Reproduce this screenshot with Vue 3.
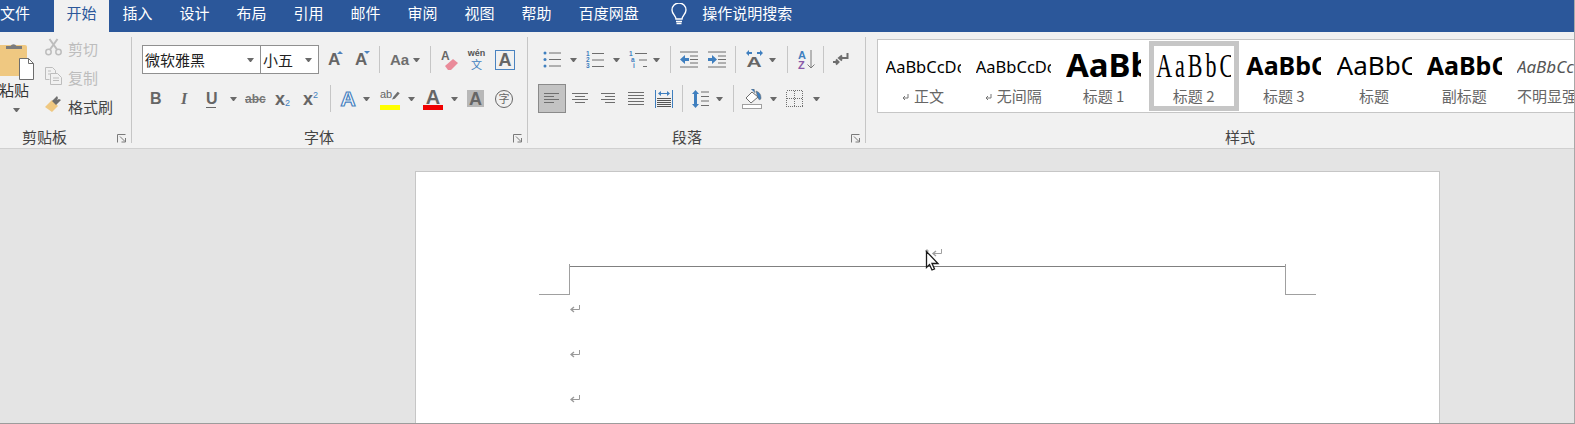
<script setup>
const tabs = ['开始', '插入', '设计', '布局', '引用', '邮件', '审阅', '视图', '帮助', '百度网盘']
const styles = [
  { key: 'normal', sample: 'AaBbCcDc', label: '正文', mark: true },
  { key: 'normal', sample: 'AaBbCcDc', label: '无间隔', mark: true },
  { key: 'h1', sample: 'AaBbCc', label: '标题 1' },
  { key: 'h2', sample: 'AaBbC', label: '标题 2', selected: true },
  { key: 'h3', sample: 'AaBbC', label: '标题 3' },
  { key: 'title', sample: 'AaBbC', label: '标题' },
  { key: 'h3', sample: 'AaBbC', label: '副标题' },
  { key: 'subtle', sample: 'AaBbCcDc', label: '不明显强调' }
]
</script>

<template>
  <div class="app">
    <div class="tabs">
      <span class="file">文件</span>
      <span v-for="(t, i) in tabs" :key="t" class="tab" :class="{ active: i === 0 }">{{ t }}</span>
      <svg class="bulb" width="16" height="23" viewBox="0 0 16 23">
        <path d="M5 16c0-3-4-5-4-9a7 7 0 0 1 14 0c0 4-4 6-4 9z" fill="none" stroke="#fff" stroke-width="1.4" />
        <path d="M5 18.500h6M5.500 20.500h5" stroke="#fff" stroke-width="1.300" />
      </svg>
      <span class="search">操作说明搜索</span>
    </div>

    <div class="ribbon">
      <section class="group g-clip">
        <div class="body clip-body">
          <div class="paste">
            <svg width="34" height="39" viewBox="0 0 34 39">
              <rect x="-4" y="4" width="31" height="31" rx="2" fill="#efc881" />
              <path d="M6 8V5h4.500a3.500 3.500 0 0 1 6 0H22v3z" fill="#7b7b7b" />
              <path d="M19.500 17.500h9l5 5v16h-14z" fill="#fff" stroke="#6d6d6d" />
              <path d="M28.500 17.500v5h5" fill="none" stroke="#6d6d6d" />
            </svg>
            <span class="paste-label">粘贴</span>
            <i class="caret paste-caret"></i>
          </div>
          <div class="clip-actions">
            <div class="clip-row">
              <svg width="17" height="18" viewBox="0 0 17 18" fill="none" stroke="#bdbdbd" stroke-width="1.500">
                <circle cx="3.500" cy="14" r="2.700" /><circle cx="13.500" cy="14" r="2.700" />
                <path d="M5 11.500 12.500 1M12 11.500 4.500 1" stroke-width="2" />
              </svg>
              <span class="off">剪切</span>
            </div>
            <div class="clip-row">
              <svg width="17" height="18" viewBox="0 0 17 18" fill="none" stroke="#bdbdbd">
                <path d="M.5.500h7l3 3v3M.5.500v12h4M3 4h3M3 7h2" />
                <path d="M5.500 6.500h7l4 4v7h-11z" fill="#f1f1f1" />
                <path d="M8 11h6M8 13.500h6" />
              </svg>
              <span class="off">复制</span>
            </div>
            <div class="clip-row">
              <svg width="17" height="17" viewBox="0 0 17 17">
                <path d="M0 11 7 4l6 6-6 6z" fill="#efc881" />
                <path d="m7 5 5-5 1 2-1 2 2-1 2 1-5 5z" fill="#6e6e6e" />
              </svg>
              <span class="on">格式刷</span>
            </div>
          </div>
        </div>
        <div class="label-row">
          <span></span><span class="g-label">剪贴板</span>
          <svg class="launch" width="10" height="9" viewBox="0 0 10 9" fill="none" stroke="#7a7a7a"><path d="M.5 8.500v-8h8M3 2.500l5 5M8.500 4v4h-4" /></svg>
        </div>
      </section>

      <section class="group g-font">
        <div class="body">
          <div class="row r1">
            <div class="combo c-font"><span>微软雅黑</span><i class="caret"></i></div>
            <div class="combo c-size"><span>小五</span><i class="caret"></i></div>
            <div class="agrow m9"><span>A</span><i class="tri up"></i></div>
            <div class="agrow m13"><span>A</span><i class="tri down"></i></div>
            <i class="sep m10"></i>
            <span class="aa m10">Aa</span>
            <i class="caret m6"></i>
            <i class="sep m10"></i>
            <div class="erase m10">
              <span>A</span>
              <svg width="14" height="12" viewBox="0 0 14 12"><path d="m0 8 8-7 5 4-7 7H3z" fill="#ea8b9a" /></svg>
            </div>
            <div class="wen m10"><span class="w1">wén</span><span class="w2">文</span></div>
            <span class="abox m11">A</span>
          </div>
          <div class="row r2">
            <b class="fmt m8 w10">B</b>
            <i class="fmt ital m20 w8">I</i>
            <span class="fmt under m18 w10">U</span>
            <i class="caret m14"></i>
            <span class="abc m8">abc</span>
            <span class="xs m10">x<sub>2</sub></span>
            <span class="xs m12">x<sup>2</sup></span>
            <i class="sep m11"></i>
            <span class="a-outline m9">A</span>
            <i class="caret m7"></i>
            <div class="hl m10">
              <div class="hl-top">
                <span>ab</span>
                <svg width="11" height="12" viewBox="0 0 11 12"><path d="m0 11 2-4 6-7 3 2-7 8z" fill="#6e6e6e" /></svg>
              </div>
              <i class="bar yellow"></i>
            </div>
            <i class="caret m8"></i>
            <div class="hl m8">
              <span class="hl-a">A</span>
              <i class="bar red"></i>
            </div>
            <i class="caret m8"></i>
            <span class="shade m9">A</span>
            <span class="zi m11">字</span>
          </div>
        </div>
        <div class="label-row">
          <span></span><span class="g-label">字体</span>
          <svg class="launch" width="10" height="9" viewBox="0 0 10 9" fill="none" stroke="#7a7a7a"><path d="M.5 8.500v-8h8M3 2.500l5 5M8.500 4v4h-4" /></svg>
        </div>
      </section>

      <section class="group g-para">
        <div class="body">
          <div class="row r1">
            <svg class="m5" width="18" height="17" viewBox="0 0 18 17">
              <g fill="#3f7fbf"><circle cx="2" cy="2" r="1.500" /><circle cx="2" cy="8.500" r="1.500" /><circle cx="2" cy="15" r="1.500" /></g>
              <path d="M6 2h12M6 8.500h12M6 15h12" stroke="#6e6e6e" />
            </svg>
            <i class="caret m9"></i>
            <div class="num m9">
              <div class="num-col"><span>1</span><span>2</span><span>3</span></div>
              <svg width="12" height="18" viewBox="0 0 12 18"><path d="M0 2.500h12M0 9h12M0 15.500h12" stroke="#6e6e6e" /></svg>
            </div>
            <i class="caret m9"></i>
            <div class="num m9">
              <div class="num-col stepped"><span>1</span><span>a</span><span>i</span></div>
              <svg width="12" height="18" viewBox="0 0 12 18"><path d="M0 2.500h12M4 9h8M8 15.500h4" stroke="#6e6e6e" /></svg>
            </div>
            <i class="caret m6"></i>
            <i class="sep m10"></i>
            <svg class="m9" width="18" height="17" viewBox="0 0 18 17">
              <path d="M0 1h18M10 5h8M10 8.500h8M10 12h8M0 16h18" stroke="#6e6e6e" />
              <path d="M0 8.500 5 4v3h4v3H5v3z" fill="#3f7fbf" />
            </svg>
            <svg class="m10" width="18" height="17" viewBox="0 0 18 17">
              <path d="M0 1h18M10 5h8M10 8.500h8M10 12h8M0 16h18" stroke="#6e6e6e" />
              <path d="M9 8.500 4 4v3H0v3h4v3z" fill="#3f7fbf" />
            </svg>
            <i class="sep m9"></i>
            <div class="tdir m9">
              <svg width="19" height="6" viewBox="0 0 19 6"><path d="M1 3 4 0v2h3v2H4v2zM18 3l-3-3v2h-3v2h3v2z" fill="#3f7fbf" /></svg>
              <span>A</span>
            </div>
            <i class="caret m5"></i>
            <i class="sep m11"></i>
            <div class="sort m10">
              <div class="sort-col"><span class="s-a">A</span><span class="s-z">Z</span></div>
              <svg width="8" height="19" viewBox="0 0 8 19"><path d="M4 0v18M.5 14.500 4 18l3.500-3.500" fill="none" stroke="#7a7a7a" /></svg>
            </div>
            <i class="sep m8"></i>
            <svg class="m9" width="16" height="13" viewBox="0 0 16 13">
              <path d="M14.500 0v5H7M9 2.500 6 5l3 2.500" fill="none" stroke="#6e6e6e" stroke-width="2" />
              <path d="M0 9h5M3 6.500 5.500 9 3 11.500" fill="none" stroke="#6e6e6e" stroke-width="2" />
            </svg>
          </div>
          <div class="row r2">
            <div class="pressed">
              <svg width="16" height="11" viewBox="0 0 16 11"><path d="M0 .5h15M0 3.500h10M0 6.500h15M0 9.500h10" stroke="#6e6e6e" /></svg>
            </div>
            <svg class="m6" width="16" height="11" viewBox="0 0 16 11"><path d="M0 .5h16M3 3.500h10M0 6.500h16M3 9.500h10" stroke="#6e6e6e" /></svg>
            <svg class="m13" width="14" height="11" viewBox="0 0 14 11"><path d="M0 .5h14M4 3.500h10M0 6.500h14M4 9.500h10" stroke="#6e6e6e" /></svg>
            <svg class="m13" width="16" height="13" viewBox="0 0 16 13"><path d="M0 .5h16M0 3.500h16M0 6.500h16M0 9.500h16M0 12.500h16" stroke="#6e6e6e" /></svg>
            <svg class="m11" width="18" height="18" viewBox="0 0 18 18">
              <path d="M.5 0v18M17.500 0v18" stroke="#3f7fbf" />
              <path d="M3 3.500 6 1v2h6V1l3 2.500L12 6V4H6v2z" fill="#3f7fbf" />
              <path d="M2 8.500h14M2 10.500h14M2 12.500h14M2 14.500h14M2 16.500h14" stroke="#555" />
            </svg>
            <i class="sep m9"></i>
            <svg class="m9" width="17" height="18" viewBox="0 0 17 18">
              <path d="M3.500 0 7 4H5v10h2l-3.500 4L0 14h2V4H0z" fill="#3f7fbf" />
              <path d="M9 2h8M9 6.500h8M9 11h8M9 15.500h8" stroke="#6e6e6e" />
            </svg>
            <i class="caret m7"></i>
            <i class="sep m10"></i>
            <svg class="m8" width="20" height="20" viewBox="0 0 20 20">
              <path d="M10 3 4 9l5 5 7-6z" fill="#fff" stroke="#6e6e6e" />
              <path d="M9 0h3l1 4M14 2c3 1 5 3 5 7 0 2-2 2-2.500 1L15 6z" fill="#3f7fbf" stroke="#6e6e6e" stroke-width=".6" />
              <rect x=".5" y="15.500" width="19" height="4" fill="#fff" stroke="#a0a0a0" />
            </svg>
            <i class="caret m8"></i>
            <svg class="m9 crisp" width="17" height="17" viewBox="0 0 17 17">
              <path d="M.5.500h16v16H.5zM8.500.500v16M.5 8.500h16" fill="none" stroke="#707070" stroke-dasharray="1 1" />
            </svg>
            <i class="caret m10"></i>
          </div>
        </div>
        <div class="label-row">
          <span></span><span class="g-label">段落</span>
          <svg class="launch" width="10" height="9" viewBox="0 0 10 9" fill="none" stroke="#7a7a7a"><path d="M.5 8.500v-8h8M3 2.500l5 5M8.500 4v4h-4" /></svg>
        </div>
      </section>

      <section class="group g-style">
        <div class="gallery">
          <div v-for="(s, i) in styles" :key="i" class="style" :class="{ selected: s.selected }">
            <div class="sample" :class="s.key"><span class="inner">{{ s.sample }}</span></div>
            <div class="style-label">
              <svg v-if="s.mark" class="mark-sm" width="7" height="7" viewBox="0 0 7 7" fill="none" stroke="#777"><path d="M6 0v4H1M3 2 1 4l2 2" /></svg>
              <span>{{ s.label }}</span>
            </div>
          </div>
        </div>
        <div class="label-row style-row"><span class="g-label">样式</span></div>
      </section>
    </div>

    <div class="doc">
      <div class="page">
        <div class="head-zone">
          <div class="step-l"></div>
          <div class="rule"></div>
          <div class="step-r"></div>
        </div>
        <div class="paras">
          <svg v-for="n in 3" :key="n" class="pmark" width="10" height="9" viewBox="0 0 10 9" fill="none" stroke="#999"><path d="M9.500 0v4.500H1.500" /><path d="M4 2 1 4.500 4 7" stroke-width="1.400" /></svg>
        </div>
        <svg class="top-mark" width="20" height="24" viewBox="0 0 20 24">
          <path d="M16.500 0v4.500H8" fill="none" stroke="#a0a0a0" />
          <path d="M11 2 8 4.500 11 7" fill="none" stroke="#a0a0a0" stroke-width="1.400" />
          <path d="M2 0 4 2 2 4 0 2z" fill="#aaa" />
          <path d="M1.500 2.500V18.500l3-3 2.500 5.500 2.500-1-2.500-5.500H13z" fill="#fff" stroke="#1b1b1b" stroke-width="1.300" />
        </svg>
      </div>
    </div>
  </div>
</template>

<style>
html, body { margin: 0; background: #e4e4e4; overflow: hidden; }
</style>

<style scoped>
.app { width: 1575px; height: 424px; overflow: hidden; position: relative; font-family: "Noto Sans CJK SC", "Noto Sans", sans-serif; color: #444; display: flex; flex-direction: column; border-bottom: 1px solid #9c9c9c; border-right: 1px solid #a8a8a8; box-sizing: border-box; }
.tabs { height: 32px; flex: none; background: #2b579a; color: #fff; display: flex; align-items: center; font-size: 15px; }
.file { width: 54px; box-sizing: border-box; line-height: 25px; height: 32px; }
.tab { height: 32px; line-height: 25px; padding: 0 13.500px; box-sizing: border-box; }
.tab.active { background: #f1f1f1; color: #2b579a; padding: 0 12.500px; width: 55px; }
.bulb { margin-left: 19px; margin-top: -4px; }
.search { margin-left: 15px; height: 32px; line-height: 25px; }

.ribbon { height: 117px; flex: none; box-sizing: border-box; background: #f1f1f1; border-bottom: 1px solid #d0d0d0; padding-top: 5px; display: flex; align-items: flex-start; }
.group { height: 106px; box-sizing: border-box; display: flex; flex-direction: column; border-right: 1px solid #c6c6c6; flex: none; }
.g-clip { width: 132px; }
.g-font { width: 396px; padding-left: 10px; padding-top: 8px; }
.g-para { width: 338px; padding-left: 10px; padding-top: 8px; }
.g-style { width: 708px; padding-left: 11px; border-right: 0; padding-top: 2px; }
.body { flex: 1; min-height: 0; }

.label-row { height: 20px; flex: none; display: grid; align-items: center; margin-bottom: -4px; padding-right: 4px; }
.g-clip .label-row { grid-template-columns: 22px auto 1fr; }
.g-font .label-row { grid-template-columns: 172px auto 1fr; margin-left: -10px; }
.g-para .label-row { grid-template-columns: 144px auto 1fr; margin-left: -10px; }
.g-label { font-size: 15px; color: #444; line-height: 20px; }
.launch { justify-self: end; margin-top: 2px; }

.caret { display: block; flex: none; width: 1px; height: 0; border-left: 3px solid transparent; border-right: 3px solid transparent; border-top: 4px solid #6a6a6a; }
.sep { display: block; flex: none; width: 1px; height: 27px; background: #c6c6c6; }

.row { display: flex; align-items: center; height: 29px; }
.r2 { margin-top: 10px; }
.m5 { margin-left: 5px; } .m6 { margin-left: 6px; } .m7 { margin-left: 7px; } .m8 { margin-left: 8px; }
.m9 { margin-left: 9px; } .m10 { margin-left: 10px; } .m11 { margin-left: 11px; } .m12 { margin-left: 12px; }
.m13 { margin-left: 13px; } .m14 { margin-left: 14px; } .m18 { margin-left: 18px; } .m20 { margin-left: 20px; }

.clip-body { display: flex; }
.paste { width: 45px; flex: none; display: flex; flex-direction: column; padding-top: 4px; box-sizing: border-box; }
.paste-label { font-size: 15px; line-height: 20px; margin-left: -1px; color: #333; white-space: nowrap; }
.paste-caret { margin: 8px 0 0 13px; }
.clip-actions { display: flex; flex-direction: column; margin-top: -3.500px; }
.clip-row { display: flex; align-items: center; height: 29px; gap: 6px; font-size: 15px; flex: none; }
.clip-row svg { margin-top: -3px; }
.off { color: #bdbdbd; } .on { color: #444; }

.combo { height: 29px; box-sizing: border-box; background: #fff; border: 1px solid #909090; display: flex; align-items: center; justify-content: space-between; font-size: 15px; color: #222; padding: 0 6px 0 2px; }
.c-font { width: 119px; }
.c-size { width: 59px; margin-left: -1px; }

.agrow { width: 14px; height: 20px; display: flex; font: 700 17px/20px "Liberation Sans", sans-serif; color: #666; position: relative; }
.tri { position: absolute; right: -1px; width: 0; height: 0; border-left: 3px solid transparent; border-right: 3px solid transparent; }
.tri.up { top: 1px; border-bottom: 3px solid #4a83c0; }
.tri.down { top: 1px; border-top: 3px solid #4a83c0; }
.aa { font: 700 15px/20px "Liberation Sans", sans-serif; color: #6e6e6e; width: 17px; flex: none; white-space: nowrap; }
.erase { width: 18px; height: 20px; position: relative; font: 700 12px/13px "Liberation Sans", sans-serif; color: #666; }
.erase svg { position: absolute; right: 0; bottom: 0; }
.wen { width: 15px; display: flex; flex-direction: column; align-items: center; line-height: 1; }
.w1 { font: 700 9px/9px "Liberation Sans", sans-serif; color: #555; white-space: nowrap; }
.w2 { font-size: 11px; line-height: 12px; color: #3f7fbf; }
.abox { width: 20px; height: 20px; box-sizing: border-box; border: 1px solid #4a83c0; font: 700 18px/18px "Liberation Sans", sans-serif; color: #666; text-align: center; }
.fmt { font: 700 16px/20px "Liberation Sans", sans-serif; color: #666; display: block; text-align: center; }
.w10 { width: 10px; } .w8 { width: 8px; }
.ital { font-style: italic; font-family: "Liberation Serif", serif; }
.under { border-bottom: 1px solid #666; line-height: 17px; }
.abc { font: 700 12px/16px "Liberation Sans", sans-serif; color: #777; text-decoration: line-through; width: 20px; flex: none; white-space: nowrap; }
.xs { font: 700 18px/20px "Liberation Sans", sans-serif; color: #666; width: 16px; white-space: nowrap; display: flex; flex: none; }
.xs sub, .xs sup { font-size: 9px; font-weight: 400; color: #3f7fbf; line-height: 12px; position: static; }
.xs sub { align-self: flex-end; }
.xs sup { align-self: flex-start; }
.a-outline { width: 16px; font: 700 21px/20px "Liberation Sans", sans-serif; color: #fff; -webkit-text-stroke: 1.200px #4a83c0; text-align: center; display: flex; justify-content: center; flex: none; }
.hl { width: 20px; display: flex; flex-direction: column; align-items: center; margin-top: 2px; }
.hl-top { width: 20px; height: 15px; display: flex; justify-content: space-between; align-items: flex-start; font: 400 11px/9px "Liberation Sans", sans-serif; color: #666; }
.hl-a { font: 700 20px/15px "Liberation Sans", sans-serif; color: #666; }
.bar { display: block; width: 20px; height: 5px; }
.yellow { background: #ffff00; } .red { background: #f00000; }
.shade { width: 17px; height: 17px; background: #b8b8b8; font: 700 18px/18px "Liberation Sans", sans-serif; color: #666; text-align: center; }
.zi { width: 18px; height: 18px; box-sizing: border-box; border: 1px solid #666; border-radius: 50%; font-size: 11px; line-height: 15px; text-align: center; color: #666; }
.pressed { width: 28px; height: 29px; box-sizing: border-box; background: #c3c3c3; border: 1px solid #8a8a8a; display: flex; align-items: center; justify-content: center; }
.num { width: 18px; height: 18px; display: flex; justify-content: space-between; }
.num-col { width: 6px; display: flex; flex-direction: column; font: 700 6.500px/6px "Liberation Sans", sans-serif; color: #3f7fbf; }
.stepped span:nth-child(2) { margin-left: 2px; }
.stepped span:nth-child(3) { margin-left: 4px; }
.tdir { width: 19px; display: flex; flex-direction: column; align-items: center; height: 19px; }
.tdir span { font: 700 14px/13px "Liberation Sans", sans-serif; color: #666; transform: scaleX(1.5); }
.sort { width: 17px; display: flex; justify-content: space-between; height: 20px; }
.sort-col { width: 9px; display: flex; flex-direction: column; font: 700 11px/10px "Liberation Sans", sans-serif; }
.s-a { color: #3f7fbf; } .s-z { color: #8a5aa8; }
.crisp { shape-rendering: crispEdges; }

.gallery { height: 74px; width: 800px; box-sizing: border-box; background: #fff; border: 1px solid #c6c6c6; padding: 1px 0 0 0; display: flex; flex: none; }
.style { width: 90.200px; height: 70px; box-sizing: border-box; border: 5px solid transparent; flex: none; overflow: hidden; display: flex; flex-direction: column; align-items: center; padding: 0 3px; }
.style.selected { border-color: #c6c6c6; }
.sample { width: 75px; height: 40px; box-sizing: border-box; overflow: hidden; white-space: nowrap; display: flex; align-items: center; flex: none; font-family: "Noto Sans", sans-serif; color: #000; }
.normal { font-size: 16.500px; }
.h1 { font-size: 33px; font-weight: 700; padding-bottom: 4px; }
.h2 { font-family: "Liberation Serif", serif; font-size: 22px; letter-spacing: 3px; }
.h2 .inner { display: inline-block; transform: scaleY(1.500); }
.h3 { font-size: 25px; font-weight: 700; padding-bottom: 2px; }
.title { font-size: 26px; padding-bottom: 2px; }
.subtle { font-size: 17px; font-style: italic; color: #555; }
.style-label { font-size: 15px; line-height: 20px; height: 20px; color: #666; white-space: nowrap; display: flex; align-items: center; gap: 5px; }
.mark-sm { margin-top: 3px; }
.style-row { grid-template-columns: none; justify-items: start; padding-left: 348px; margin-top: 14px; }

.doc { flex: 1; min-height: 0; background: #e4e4e4; padding: 22px 0 0 415px; overflow: hidden; }
.page { width: 1025px; height: 300px; box-sizing: border-box; background: #fff; border: 1px solid #c6c6c6; position: relative; }
.head-zone { display: flex; margin: 92px 0 0 123px; height: 31px; }
.step-l { width: 31px; height: 31px; box-sizing: border-box; border-right: 1px solid #a0a0a0; border-bottom: 1px solid #a0a0a0; }
.rule { width: 715px; height: 0; margin-top: 2px; border-top: 1px solid #808080; }
.step-r { width: 31px; height: 31px; box-sizing: border-box; border-left: 1px solid #a0a0a0; border-bottom: 1px solid #a0a0a0; }
.paras { display: flex; flex-direction: column; gap: 36px; margin: 10px 0 0 154px; }
.pmark { display: block; }
.top-mark { position: absolute; left: 509px; top: 77px; }
</style>
